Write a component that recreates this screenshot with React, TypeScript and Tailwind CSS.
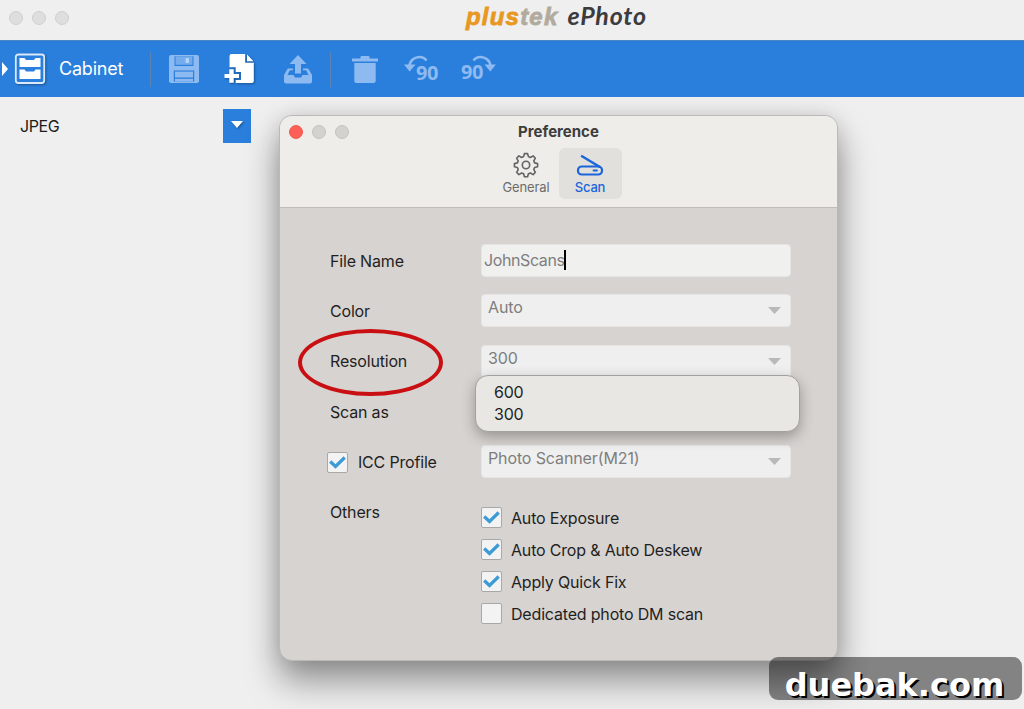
import React, { useState } from 'react';
import clsx from 'clsx';

interface Option {
  id: string;
  label: string;
  checked: boolean;
}

const initialOptions: Option[] = [
  { id: 'exposure', label: 'Auto Exposure', checked: true },
  { id: 'crop', label: 'Auto Crop & Auto Deskew', checked: true },
  { id: 'fix', label: 'Apply Quick Fix', checked: true },
  { id: 'dm', label: 'Dedicated photo DM scan', checked: false },
];

const resolutions = ['600', '300'];

function CabinetIcon() {
  return (
    <svg width="32" height="32" viewBox="0 0 32 32" className="drop-shadow-[1px_1px_1px_rgba(0,0,0,0.35)]">
      <rect x="1.800" y="1.500" width="28.400" height="28.500" rx="2.500" fill="#2a7fdc" stroke="#d9e9fb" strokeWidth="1.800" />
      <path d="M5.500 5h5l1.500 2h8L21.500 5h5v9h-21z" fill="#fff" />
      <path d="M5.500 16.500h5l1.500 2h8l1.500-2h5V26h-21z" fill="#fff" />
    </svg>
  );
}

function SaveIcon() {
  return (
    <svg width="30" height="28" viewBox="0 0 30 28">
      <path
        fillRule="evenodd"
        fill="#8dbaf0"
        d="M2 0h26a2 2 0 0 1 2 2v24a2 2 0 0 1-2 2H2a2 2 0 0 1-2-2V2a2 2 0 0 1 2-2zM5.500 1.300v9.700h19V1.300zM4.800 15.500v11h20.400v-11z"
      />
      <rect x="6.500" y="1.300" width="17" height="8.500" fill="#74abec" />
      <rect x="16.500" y="3" width="3.500" height="5" rx="1" fill="#b5d3f7" />
      <rect x="6" y="16.600" width="18" height="5.900" fill="#8dbaf0" />
      <rect x="6" y="23.800" width="18" height="2.700" fill="#8dbaf0" />
    </svg>
  );
}

function AddPageIcon() {
  return (
    <svg width="31" height="31" viewBox="0 0 31 31" className="drop-shadow-[1px_1px_1px_rgba(0,0,0,0.35)]">
      <path d="M7.500 0h13.700v8.800h8.600V27a2 2 0 0 1-2 2H11.700v-3H17v-8h-5.300v-4.700H5.500V2a2 2 0 0 1 2-2z" fill="#fff" />
      <path d="M23 .5 29.500 7.300H23z" fill="#fff" />
      <path d="M5.300 15.300h4.400v4.700h5.300v4H9.700v4.800H5.300V24H.5v-4h4.800z" fill="#fff" />
    </svg>
  );
}

function UploadIcon() {
  return (
    <svg width="28" height="29" viewBox="0 0 28 29" fill="#8dbaf0">
      <path d="M14 0l8.500 9H17v9.500h-6V9H5.500z" />
      <path d="M5 13.500h4v1.800H5.800L3.500 20h6l1.500 2.500h6L18.500 20h6l-2.300-4.700H19v-1.800h4c1 0 1.500.4 2 1.300L28 20v6.500a2 2 0 0 1-2 2H2a2 2 0 0 1-2-2V20l3-5.200c.5-.9 1-1.300 2-1.300z" />
    </svg>
  );
}

function TrashIcon() {
  return (
    <svg width="26" height="27" viewBox="0 0 26 27" fill="#8dbaf0">
      <path d="M0 2.500h8.500V1a1 1 0 0 1 1-1h7a1 1 0 0 1 1 1v1.500H26v3H0z" />
      <path d="M2.300 7h21.400v18a2 2 0 0 1-2 2H4.300a2 2 0 0 1-2-2z" />
    </svg>
  );
}

function RotateArrow() {
  return (
    <svg width="24" height="17" viewBox="0 0 24 17">
      <path d="M5.500 11C6 5 11 2 15.500 2c3 0 5.200 1 7 3.500" fill="none" stroke="#8dbaf0" strokeWidth="2.600" />
      <path d="M0 9.500h11.500L5.700 16.500z" fill="#8dbaf0" />
    </svg>
  );
}

function GearIcon() {
  return (
    <svg width="26" height="26" viewBox="0 0 26 26" fill="none" stroke="#646463" strokeWidth="1.600" strokeLinejoin="round">
      <path d="M11.400 1.600h3.200l.8 3 2 .9 2.700-1.600 2.300 2.300-1.600 2.700.8 2 3 .7v3.200l-3 .8-.8 2 1.600 2.700-2.300 2.300-2.700-1.600-2 .8-.8 3h-3.200l-.8-3-2-.8-2.700 1.600-2.300-2.300 1.600-2.700-.8-2-3-.8v-3.200l3-.7.8-2-1.600-2.700 2.300-2.300 2.700 1.600 2-.9z" />
      <circle cx="13" cy="13" r="3.700" />
    </svg>
  );
}

function ScannerIcon() {
  return (
    <svg width="28" height="22" viewBox="0 0 28 22" fill="none" stroke="#1a65dc" strokeWidth="2.200" strokeLinecap="round">
      <rect x="2" y="11.500" width="24" height="8" rx="3.800" />
      <path d="M6 1.300 23.500 11.800" strokeWidth="2.500" />
      <path d="M17.500 15.500h3.500" strokeWidth="1.800" />
    </svg>
  );
}

function TrafficLights({ active }: { active?: boolean }) {
  const idle = active ? 'bg-[#d3d2cf] border-[#c4c3c0]' : 'bg-[#dedede] border-[#cfcfcf]';
  return (
    <div className="flex gap-[9px]">
      <span className={clsx('size-3.5 rounded-full border', active ? 'bg-[#fb5f57] border-[#f45b54]' : idle)} />
      <span className={clsx('size-3.5 rounded-full border', idle)} />
      <span className={clsx('size-3.5 rounded-full border', idle)} />
    </div>
  );
}

function Checkbox({ checked, onClick }: { checked: boolean; onClick?: () => void }) {
  return (
    <button onClick={onClick} className="flex size-[21px] shrink-0 items-center justify-center rounded-[2px] border-[1.5px] border-[#aaa8a6] bg-[#f3f3f3]">
      {checked && (
        <svg width="17" height="13" viewBox="0 0 17 13" fill="none" stroke="#3c9ad6" strokeWidth="3.200">
          <path d="M1.200 5.500 6.500 10.500 15.700 1.500" />
        </svg>
      )}
    </button>
  );
}

function Select({ value }: { value: string }) {
  return (
    <div className="flex h-[33px] w-[310px] justify-between rounded-[4px] border border-[#e6e5e4] bg-[#efefef] pl-1.5 pr-[9px]">
      <span className="mt-0.5 text-base leading-5 tracking-[-0.12px] text-[#7e7e7e]">{value}</span>
      <svg width="13" height="7" viewBox="0 0 13 7" className="mt-3">
        <path d="M0 0h13L6.500 7z" fill="#b9b9b9" />
      </svg>
    </div>
  );
}

function Toolbar() {
  return (
    <div className="flex h-[57px] shrink-0 items-center border-t border-[#4a86c4] bg-[#2a7fdc]">
      <svg width="6" height="14" viewBox="0 0 6 14" className="ml-0.5">
        <path d="M0 0l6 7-6 7z" fill="#fff" />
      </svg>
      <div className="ml-1.5 flex w-[136px] items-center">
        <CabinetIcon />
        <span className="ml-[13px] text-lg leading-6 tracking-[-0.2px] text-white">Cabinet</span>
      </div>
      <div className="h-[35px] w-px bg-[#5b84b3]" />
      <div className="ml-[18px]"><SaveIcon /></div>
      <div className="ml-[25px]"><AddPageIcon /></div>
      <div className="ml-[29px]"><UploadIcon /></div>
      <div className="ml-[18px] h-[35px] w-px bg-[#5b84b3]" />
      <div className="ml-[21px]"><TrashIcon /></div>
      <div className="ml-[26px] flex w-9 text-[#8dbaf0]">
        <div className="-mr-[12px] mt-px"><RotateArrow /></div>
        <span className="mt-[7px] font-['Open_Sans'] text-[20px] font-bold leading-6 tracking-[-0.4px]">90</span>
      </div>
      <div className="ml-[21px] flex w-9 text-[#8dbaf0]">
        <span className="mt-1.5 font-['Open_Sans'] text-[20px] font-bold leading-6 tracking-[-0.4px]">90</span>
        <div className="-ml-[11px] mt-px -scale-x-100"><RotateArrow /></div>
      </div>
    </div>
  );
}

function PreferenceDialog() {
  const [options, setOptions] = useState<Option[]>(initialOptions);
  const [icc, setIcc] = useState(true);

  const toggle = (id: string) => {
    setOptions(options.map((o) => (o.id === id ? { ...o, checked: !o.checked } : o)));
  };

  return (
    <div className="absolute left-[279px] top-[115px] h-[546px] w-[559px] rounded-[13px] border border-[#bab9b7] bg-[#d7d3d0] shadow-[0_20px_34px_0_rgba(0,0,0,0.4),0_0_20px_rgba(0,0,0,0.1)]">
      <div className="h-[92px] rounded-t-[12px] border-b border-[#bfbcb9] bg-[#eeede9]">
        <div className="grid h-8 grid-cols-[1fr_auto_1fr] items-center pl-[9px]">
          <TrafficLights active />
          <span className="pr-[9px] text-[15px] font-bold leading-5 text-[#3d3d3c]">Preference</span>
        </div>
        <div className="flex pl-[215px]">
          <div className="flex h-[51px] w-[64px] flex-col items-center pr-[2px] pt-1">
            <GearIcon />
            <span className="text-[13px] leading-[18px] tracking-[-0.1px] text-[#6c6c6b]">General</span>
          </div>
          <div className="flex h-[51px] w-[63px] flex-col items-center rounded-[6px] bg-[#e1e0dd] pr-px pt-[7px]">
            <ScannerIcon />
            <span className="mt-px text-[13px] font-medium leading-[18px] tracking-[-0.2px] text-[#1a65dc]">Scan</span>
          </div>
        </div>
      </div>

      <div className="flex pl-[50px] pt-9 text-base tracking-[-0.18px] text-[#1f1f1f]">
        <div className="flex w-[151px] flex-col gap-[17.300px] pt-[0.800px] leading-[33px]">
          <span>File Name</span>
          <span>Color</span>
          <span>Resolution</span>
          <span>Scan as</span>
          <div className="-ml-[3px] flex items-center gap-[10px]">
            <Checkbox checked={icc} onClick={() => setIcc(!icc)} />
            <span>ICC Profile</span>
          </div>
          <span>Others</span>
        </div>

        <div className="flex flex-col gap-[17.300px]">
          <div className="flex h-[33px] w-[310px] items-center rounded-[4px] border border-[#e6e5e4] bg-[#f0f0ef] pb-px pl-0.5">
            <span className="tracking-[-0.400px] text-[#7e7e7e]">JohnScans</span>
            <span className="-ml-px h-5 w-0.5 bg-black" />
          </div>
          <Select value="Auto" />
          <Select value="300" />
          <Select value="" />
          <Select value="Photo Scanner(M21)" />
          <div className="mt-3 flex flex-col gap-[11px]">
            {options.map((option) => (
              <div key={option.id} className="flex h-[21px] items-center gap-[9px]">
                <Checkbox checked={option.checked} onClick={() => toggle(option.id)} />
                <span>{option.label}</span>
              </div>
            ))}
          </div>
        </div>
      </div>

      {/* open resolution menu */}
      <div className="absolute left-[195px] top-[259px] h-[57px] w-[325px] rounded-[13px] border border-[#a3a19f] bg-[#e8e7e3] pl-[18px] pt-1.5 text-base leading-[21.500px] tracking-[-0.2px] text-[#1f1f1f] shadow-[0_5px_14px_rgba(0,0,0,0.3)]">
        {resolutions.map((r) => (
          <div key={r}>{r}</div>
        ))}
      </div>

      {/* red highlight around the label */}
      <div className="absolute left-[18px] top-[213px] h-[67px] w-[145px] rounded-[50%] border-4 border-[#c90f12]" />
    </div>
  );
}

export default function App() {
  return (
    <div className="relative flex h-[709px] w-[1024px] flex-col overflow-hidden bg-[#efefef] font-['Inter',sans-serif]">
      <div className="grid h-10 shrink-0 grid-cols-[466px_1fr] pt-0.5">
        <div className="pl-[9px] pt-[9px]"><TrafficLights /></div>
        <div className="flex items-baseline text-[24px] font-bold italic leading-[26px]">
          <span className="font-['Liberation_Sans'] tracking-[1.200px] text-[#e8981f] [-webkit-text-stroke:0.8px_#e8981f]">plus</span>
          <span className="font-['Liberation_Sans'] tracking-[1.200px] text-[#b2ab9d] [-webkit-text-stroke:0.8px_#b2ab9d]">tek</span>
          <span className="ml-[9px] font-['Lato'] text-[25px] tracking-[0.8px] text-[#3c3c3e]">ePhoto</span>
        </div>
      </div>

      <Toolbar />

      <div className="flex w-[251px] justify-between pl-5 pt-3">
        <span className="mt-[5px] text-base leading-6 tracking-[-0.400px] text-[#1c1c1c]">JPEG</span>
        <button className="flex h-[34px] w-7 justify-center bg-[#2a7fdc] pt-3">
          <svg width="12" height="8" viewBox="0 0 12 8" className="drop-shadow-[1px_1px_1px_rgba(0,0,0,0.35)]">
            <path d="M0 0h12L6 7z" fill="#fff" />
          </svg>
        </button>
      </div>

      <PreferenceDialog />

      <div className="absolute left-[769px] top-[657px] flex h-[43px] w-[253px] items-center justify-center rounded-[9px] bg-black/45 pr-0.5 pt-3">
        <span className="font-['DejaVu_Sans'] text-[32px] font-bold leading-8 text-white [text-shadow:2px_2px_0_#000]">duebak.com</span>
      </div>
    </div>
  );
}
